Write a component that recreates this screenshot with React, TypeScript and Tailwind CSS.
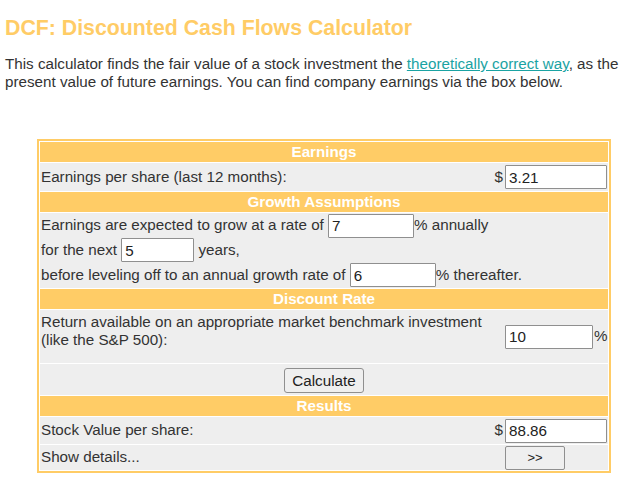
import React from "react";

function Field({ value, w, className = "" }: { value: string; w: string; className?: string }) {
  return (
    <input
      readOnly
      value={value}
      className={`h-[24px] ${w} border border-[#8f8f8f] bg-white px-[3px] text-[15.2px] text-[#222] outline-none rounded-[1px] align-middle ${className}`}
    />
  );
}

function Header({ children }: { children: React.ReactNode }) {
  return (
    <div className="h-[20px] bg-[#ffcc66] text-center text-[15.2px] font-bold leading-[20px] text-white">
      {children}
    </div>
  );
}

export default function App() {
  return (
    <div className="min-h-[481px] w-[640px] bg-white font-['Liberation_Sans',Arial,sans-serif] text-[#333]">
      <h1 className="pl-[5px] pt-[16px] text-[21.3px] font-bold leading-[24px] text-[#ffcc66]">
        DCF: Discounted Cash Flows Calculator
      </h1>
      <p className="mt-[15px] pl-[5px] pr-[4px] text-[15.2px] leading-[18px] text-[#333]">
        This calculator finds the fair value of a stock investment the{" "}
        <a className="text-[#1aa3a3] underline">theoretically correct way</a>, as the present value of future
        earnings. You can find company earnings via the box below.
      </p>

      <div className="ml-[37px] mt-[48px] flex w-[574px] flex-col gap-[1px] border-2 border-[#ffcc66] bg-white p-[1px] text-[15.2px]">
        <Header>Earnings</Header>
        <div className="flex h-[28px] items-center bg-[#eeeeee] pl-[1px] pr-[1px]">
          <div className="flex-1">Earnings per share (last 12 months):</div>
          <div className="w-[12px] pr-[2px] text-right">$</div>
          <div className="w-[102px]">
            <Field value="3.21" w="w-[102px]" />
          </div>
        </div>

        <Header>Growth Assumptions</Header>
        <div className="flex flex-col bg-[#eeeeee] pl-[1px]">
          <div className="flex h-[25px] items-center whitespace-pre">
            <span>Earnings are expected to grow at a rate of </span>
            <Field value="7" w="w-[86px]" />
            <span>% annually</span>
          </div>
          <div className="flex h-[24px] items-center whitespace-pre">
            <span>for the next </span>
            <Field value="5" w="w-[73px]" />
            <span> years,</span>
          </div>
          <div className="flex h-[26px] items-center whitespace-pre">
            <span>before leveling off to an annual growth rate of </span>
            <Field value="6" w="w-[86px]" />
            <span>% thereafter.</span>
          </div>
        </div>

        <Header>Discount Rate</Header>
        <div className="flex h-[53px] bg-[#eeeeee] pl-[1px] pr-[1px]">
          <div className="flex-1 pt-[3px] leading-[18px]">
            Return available on an appropriate market benchmark investment
            <br />
            (like the S&amp;P 500):
          </div>
          <div className="w-[12px]" />
          <div className="flex w-[102px] items-center">
            <Field value="10" w="w-[88px]" />
            <span className="ml-[1px]">%</span>
          </div>
        </div>
        <div className="flex h-[31px] items-center justify-center bg-[#eeeeee] pt-[2px]">
          <button className="h-[25px] rounded-[3px] border border-[#8f8f8f] bg-[#efefef] px-[7px] text-[15.2px] leading-[23px] text-[#222]">
            Calculate
          </button>
        </div>

        <Header>Results</Header>
        <div className="flex h-[27px] items-center bg-[#eeeeee] pl-[1px] pr-[1px]">
          <div className="flex-1">Stock Value per share:</div>
          <div className="w-[12px] pr-[2px] text-right">$</div>
          <div className="w-[102px]">
            <Field value="88.86" w="w-[102px]" />
          </div>
        </div>
        <div className="flex h-[25px] items-center bg-[#eeeeee] pl-[1px] pr-[1px]">
          <div className="flex-1">Show details...</div>
          <div className="w-[12px]" />
          <div className="w-[102px]">
            <button className="h-[24px] w-[60px] rounded-[2px] border border-[#8f8f8f] bg-[#efefef] text-[13px] leading-[22px] text-[#222]">
              &gt;&gt;
            </button>
          </div>
        </div>
      </div>
    </div>
  );
}
